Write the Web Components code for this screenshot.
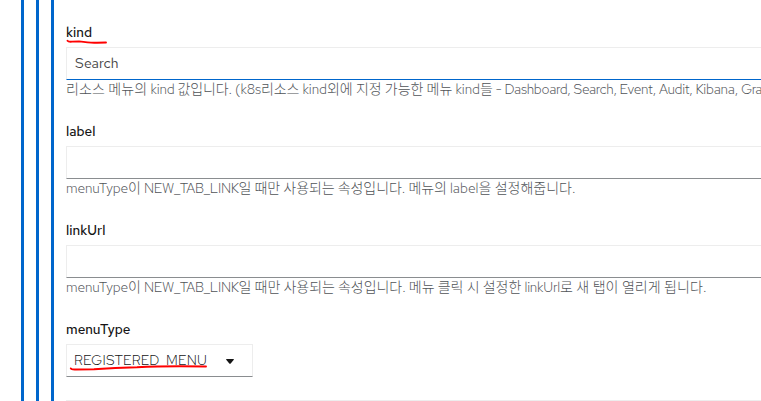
<!DOCTYPE html>
<html lang="ko"><head><meta charset="utf-8"><title>Menu form</title>
<style>body{margin:0;background:#fff;overflow:hidden}</style></head><body>
<form-page></form-page>
<script>
class TextRun extends HTMLElement{
  connectedCallback(){
    const t=this.getAttribute('text');
    this.attachShadow({mode:'open'}).innerHTML=`<style>:host{display:block;flex:none;white-space:pre}span{display:inline-block}</style><span></span>`;
    const s=this.shadowRoot.querySelector('span');
    s.textContent=t;
    const w=+this.getAttribute('width');
    if(w){
      s.style.letterSpacing=((w-s.getBoundingClientRect().width)/t.length)+'px';
      this.style.width=w+'px';
    }
  }
}
customElements.define('text-run',TextRun);
class HintText extends HTMLElement{
  connectedCallback(){
    this.attachShadow({mode:'open'}).innerHTML=`<style>:host{display:flex;height:19px;font:300 14px/19px "Red Hat Text","Noto Sans","Noto Sans CJK KR",sans-serif;color:#505357;white-space:pre}</style><slot></slot>`;
  }
}
customElements.define('hint-text',HintText);
class TextField extends HTMLElement{
  connectedCallback(){
    this.attachShadow({mode:'open'}).innerHTML=`<style>
:host{display:block;height:99px}
.label{display:flex;position:relative;height:21px;margin-bottom:5px;font:500 13.5px/23px "Red Hat Text","Noto Sans",sans-serif;color:#151515}
.box{display:flex;align-items:center;box-sizing:border-box;height:33px;padding:0 0 1px 8px;border:1px solid #ededed;border-right:0;border-bottom-color:#8a8d90;font:400 14px/20px "Red Hat Text","Noto Sans",sans-serif;color:#444;background:#fff}
:host([active]) .box{border-bottom-color:#06c}
</style><div class="label"><text-run text="${this.getAttribute('label')}" width="${this.getAttribute('label-width')}"></text-run><slot name="mark"></slot></div><div class="box"><slot name="value"></slot></div><slot></slot>`;
  }
}
customElements.define('text-field',TextField);
class PenMark extends HTMLElement{
  connectedCallback(){
    this.attachShadow({mode:'open'}).innerHTML=`<style>:host{position:absolute;left:0;top:0;pointer-events:none}svg{display:block;overflow:visible;margin:0}</style><svg width="1" height="1"><path d="${this.getAttribute('d')}" fill="none" stroke="#f00" stroke-width="1.9" stroke-linecap="round" stroke-linejoin="round"/></svg>`;
  }
}
customElements.define('pen-mark',PenMark);
class SelectField extends HTMLElement{
  connectedCallback(){
    this.attachShadow({mode:'open'}).innerHTML=`<style>
:host{display:block;height:80px}
.label{height:21px;margin-bottom:5px;font:500 13.5px/23px "Red Hat Text","Noto Sans",sans-serif;color:#151515}
.box{position:relative;display:flex;align-items:center;justify-content:space-between;box-sizing:border-box;width:187px;height:33px;padding:0 18px 1px 7px;border:1px solid #ededed;border-bottom-color:#8a8d90;font:300 14px/20px "Red Hat Text","Noto Sans",sans-serif;color:#151515}
svg{display:block;margin-top:3px}
</style><div class="label"><text-run text="menuType" width="64.5"></text-run></div><div class="box"><text-run text="REGISTERED_MENU" width="133"></text-run><svg width="8" height="5"><path d="M.6 0h6.8q1 .1.2.9L4.7 4.4q-.7.7-1.4 0L.4.9Q-.3.2.6 0z" fill="#151515"/></svg><slot></slot></div>`;
  }
}
customElements.define('select-field',SelectField);
class FormPage extends HTMLElement{
  connectedCallback(){
    const runs=a=>a.map(([t,w])=>`<text-run text="${t}" width="${w}"></text-run>`).join('');
    this.attachShadow({mode:'open'}).innerHTML=`<style>
:host{display:flex;height:401px;width:761px;overflow:hidden;box-sizing:border-box;padding-left:21px}
.rails{display:flex;gap:12px;flex:none}
.rails i{width:3px;background:#06c}
main{flex:none;width:695px;margin-left:12px;padding-top:21px;overflow:hidden}
hr{height:1px;border:0;margin:2px 0 0;background:#ededed}
</style><div class="rails"><i></i><i></i><i></i></div><main>
<text-field active label="kind" label-width="26"><pen-mark slot="mark" d="M1.5 19.7Q2.4 21 6 20.6L13 20.4Q25 22.2 31 21.7L40 21.5"></pen-mark><text-run slot="value" text="Search" width="43.5"></text-run>
<hint-text>${runs([['리소스 메뉴의 ',84.5],['kind ',27],['값입니다. ',57.5],['(k8s',26],['리소스 ',41.5],['kind',24.5],['외에 지정 가능한 메뉴 ',128.5],['kind',24.5],['들 - ',24.5],['Dashboard, ',69],['Search, ',46],['Event, ',39.5],['Audit, ',36.5],['Kibana, ',45.5],['Gra',21]])}</hint-text></text-field>
<text-field label="label" label-width="29.5"><hint-text>${runs([['menuType',62],['이 ',16],['NEW_TAB_LINK',94.5],['일 때만 사용되는 속성입니다. 메뉴의 ',211.5],['label',28.5],['을 설정해줍니다.',97]])}</hint-text></text-field>
<text-field label="linkUrl" label-width="39.5"><hint-text>${runs([['menuType',62],['이 ',16],['NEW_TAB_LINK',94.5],['일 때만 사용되는 속성입니다. 메뉴 클릭 시 설정한 ',286],['linkUrl',35.5],['로 새 탭이 열리게 됩니다.',146.5]])}</hint-text></text-field>
<select-field><pen-mark d="M3.8 23.4Q4.5 24.8 9 24.5L27 24.3Q48 22.5 70 22.2Q100 20.7 139 21.5"></pen-mark></select-field><hr></main>`;
  }
}
customElements.define('form-page',FormPage);
</script></body></html>
